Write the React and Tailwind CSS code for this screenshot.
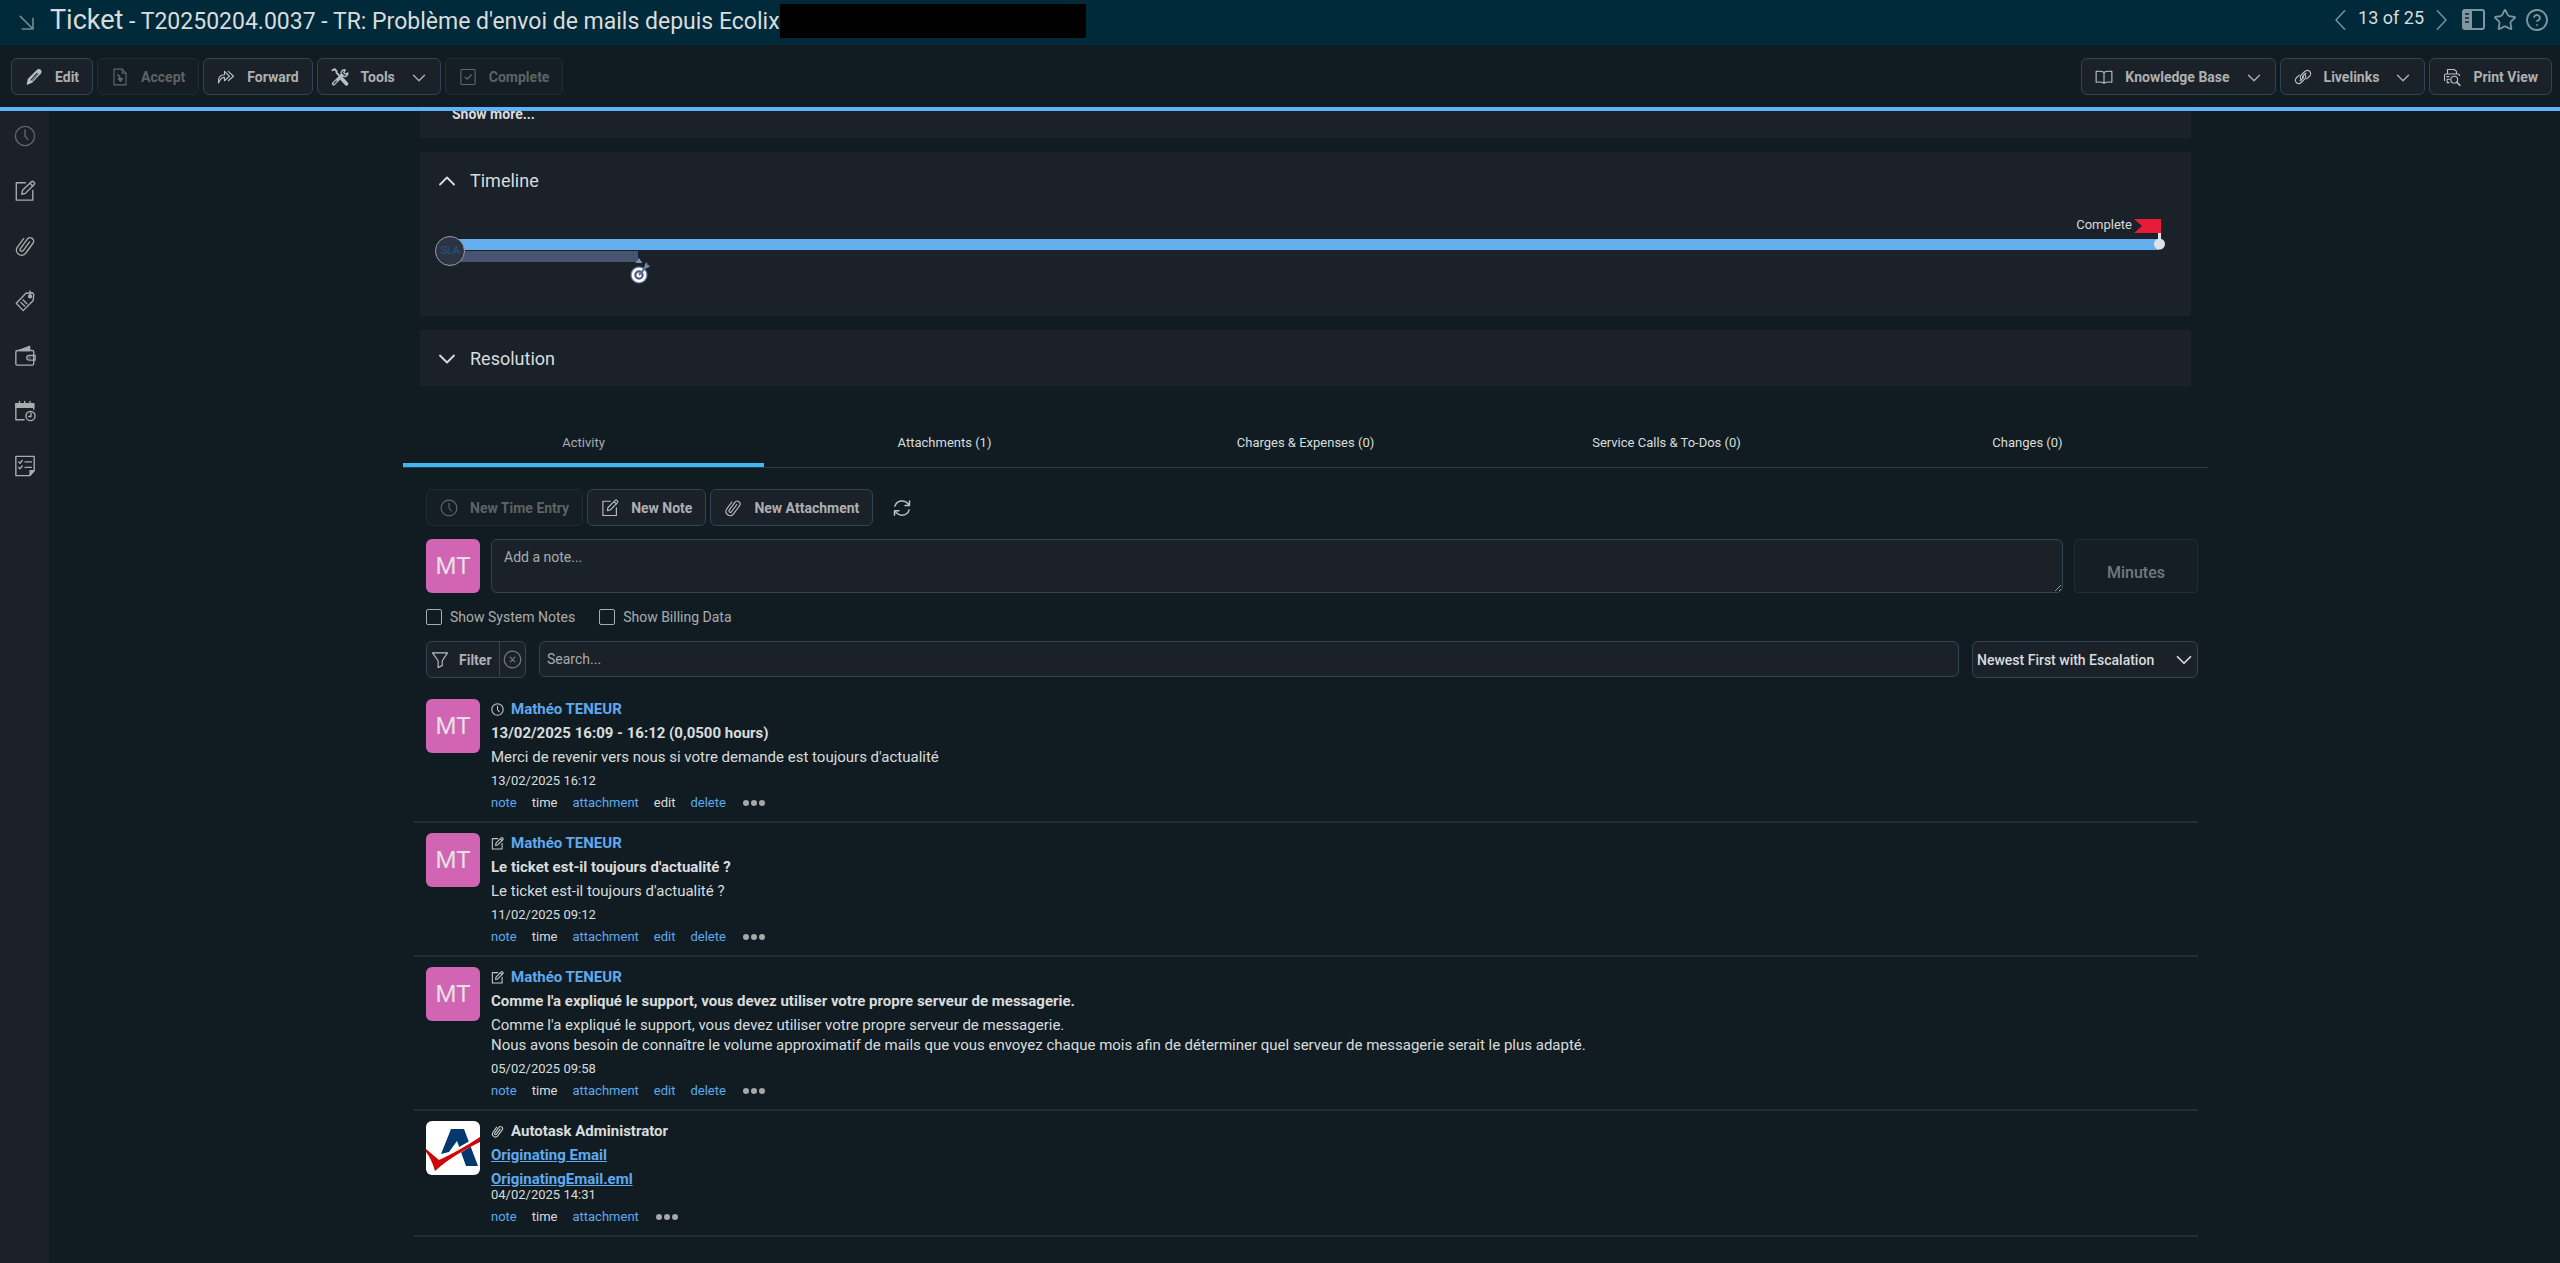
import React, { useState } from 'react';
import clsx from 'clsx';
import { ChevronDown, ChevronUp, Star, CircleHelp } from 'lucide-react';

const Svg = ({ size = 22, sw = 1.5, className, children }) => (
  <svg
    width={size}
    height={size}
    viewBox="0 0 24 24"
    fill="none"
    stroke="currentColor"
    strokeWidth={sw}
    strokeLinecap="round"
    strokeLinejoin="round"
    className={clsx('shrink-0', className)}
    aria-hidden="true"
  >
    {children}
  </svg>
);

const ClockIcon = (props) => (
  <Svg {...props}>
    <circle cx="12" cy="12" r="10.5" />
    <path d="M12 5.5v6.5l3 4" />
  </Svg>
);

const NoteIcon = (props) => (
  <Svg {...props}>
    <path d="M12.5 3H2.5v19h18V11.5" />
    <path d="M8.5 15.5l.8-4.2L19 1.8a1.5 1.5 0 0 1 2.1 0l.9.9a1.5 1.5 0 0 1 0 2.1l-9.6 9.8z" />
    <path d="M17.5 3.5l3 3" />
  </Svg>
);

const ClipIcon = (props) => (
  <Svg {...props}>
    <path d="M17 7.5l-7.2 9.8a1.9 1.9 0 0 1-3-2.2l7.7-10.6a3.8 3.8 0 0 1 6.2 4.5l-8.2 11.2a5.600 5.600 0 0 1-9-6.600L10.500 4" />
  </Svg>
);

const TagIcon = (props) => (
  <Svg {...props}>
    <path d="M2.5 14.5L13 3.5l7-.5 1.500 1.500-.5 7L10 22.500z" />
    <circle cx="17.5" cy="7" r="1.6" fill="currentColor" />
    <path d="M17.5 7V1M7.5 13.5l4 4M10 11l4 4" />
  </Svg>
);

const WalletIcon = (props) => (
  <Svg {...props}>
    <path d="M5.5 6L17 1.5V6z" fill="currentColor" />
    <path d="M2 7.5C2 6.5 3 6 4 6h16c1 0 1.5.6 1.5 1.5v13c0 1-.5 1.5-1.5 1.5H3.5c-1 0-1.500-.5-1.500-1.500z" />
    <path d="M23 11.5h-6.5a2.5 2.5 0 0 0 0 5H23z" />
    <path d="M17 14h.5" />
  </Svg>
);

const CalendarIcon = (props) => (
  <Svg {...props}>
    <path d="M11 21.5H2V4h19.500v6" />
    <path d="M2 4h19.500v4H2z" fill="currentColor" />
    <path d="M6 1.500v3M11.700 1.500v3M17.500 1.500v3" />
    <circle cx="18" cy="17.5" r="5" />
    <path d="M18.5 14.5v3.500H16" />
  </Svg>
);

const ChecklistIcon = (props) => (
  <Svg {...props}>
    <path d="M2 1.5h20V17l-5 5.500H2z" />
    <path d="M17.5 22v-5H22z" fill="currentColor" />
    <path d="M5 7.500l1.500 1.500L9 6M5 13.500l1.500 1.500L9 12M12 7.500h7M12 13.500h7" />
  </Svg>
);

const PencilIcon = (props) => (
  <Svg {...props}>
    <path d="M3 21.5L4.500 15l12-12c1.500-1.500 3-1 4 0s1.200 2.500 0 4L9 19z" fill="currentColor" />
    <path d="M8 16l8-9" stroke="#1a2129" />
    <path d="M9.5 17l8-9" stroke="#1a2129" strokeWidth="1" />
  </Svg>
);

const AcceptIcon = (props) => (
  <Svg {...props}>
    <path d="M4 1.5h11L20 7v15.500H4z" />
    <path d="M15 1.500V7h5" />
    <path d="M8.500 9c3 .5 4 2.500 4 7M9.500 14l3 4 3-4z" fill="currentColor" />
  </Svg>
);

const ForwardIcon = (props) => (
  <Svg {...props}>
    <path d="M2 20C1 13 4 9 10 9V4.500l6.500 6.500-6.500 6v-4.500C6.500 12.500 4 15 2 20z" />
    <path d="M15 4.500l7 6.500-7 6" />
  </Svg>
);

const ToolsIcon = (props) => (
  <Svg {...props}>
    <path d="M2 3l3-1.500 2.500 3v2l5 5" strokeWidth="2.6" />
    <path d="M15 15l5.500 6" strokeWidth="5" />
    <path d="M3.5 21l11-11" strokeWidth="4.5" />
    <path d="M19 2.500a4.500 4.500 0 1 0 3.500 4l-3 2L17 6z" strokeWidth="1.8" />
    <path d="M4 20.500l3-3" stroke="#1a2129" />
  </Svg>
);

const CompleteIcon = (props) => (
  <Svg {...props}>
    <rect x="2.5" y="2" width="19" height="20" rx="1.5" />
    <path d="M8 12l3 3 5.500-6" />
  </Svg>
);

const BookIcon = (props) => (
  <Svg {...props}>
    <path d="M12 6C10 4 6 4 1.500 4.500V19c4-.5 8-.5 10.500 1.500 2.500-2 6.500-2 10.500-1.500V4.500C18 4 14 4 12 6zM12 6v14" />
  </Svg>
);

const LinkIcon = (props) => (
  <Svg {...props}>
    <path d="M10.500 16c-2.500-1.500-3-4.500-1-6.500L14 5c2-2 4.700-2.300 6.700-.6s2 4.600 0 6.600L17 14.500" />
    <path d="M13.500 8c2.500 1.500 3 4.500 1 6.500L10 19c-2 2-4.700 2.300-6.700.6s-2-4.600 0-6.600L7 9.500" />
    <path d="M12 13.500c-1-.8-1-2 0-3L16 7M12 10.500c1 .8 1 2 0 3L8 17" />
  </Svg>
);

const PrintIcon = (props) => (
  <Svg {...props}>
    <path d="M6 8V2h9l3 2.500V8M8 19.500H5.500V15M2 16.500V10c0-1 .7-2 2-2h16c1 0 2 .8 2 2M5.500 15H9M8 11.500H5" />
    <circle cx="15" cy="15.5" r="4.5" />
    <path d="M18.5 19l4 4" strokeWidth="2.2" />
  </Svg>
);

const RefreshIcon = (props) => (
  <Svg {...props}>
    <path d="M2.5 9.500C4 4.500 8 2.500 12 2.500c4 0 7 2 9 5M22 2.500v6h-6M21.500 14.500c-1.500 5-5.500 7-9.500 7-4 0-7-2-9-5M2 21.500v-6h6" />
  </Svg>
);

const FilterIcon = (props) => (
  <Svg {...props}>
    <path d="M2 2.500h20L15 13v6.500L9.500 22v-9z" />
  </Svg>
);

const PanelIcon = () => (
  <svg width="23" height="21" viewBox="0 0 23 21" fill="none" className="shrink-0" aria-hidden="true">
    <rect x="1" y="1" width="21" height="19" rx="2" stroke="currentColor" strokeWidth="2" />
    <path d="M1 1h9v19H1z" fill="currentColor" />
    <path d="M3 5h4M3 9h4M3 13h4" stroke="#002a39" strokeWidth="1.5" />
  </svg>
);

const AutotaskLogo = () => (
  <svg width="54" height="54" viewBox="0 0 54 54" className="shrink-0 rounded-md bg-white" role="img" aria-label="Autotask">
    <path d="M25 8h13l14 37H40L31 20 23 31l-8 2z" fill="#02386d" />
    <path d="M0 29l11 10c12-6 26-14 43-24v4C40 27 24 36 10 50z" fill="#fff" stroke="#fff" strokeWidth="2" />
    <path d="M0 28l13 11c13-6 26-13 41-23v5C38 29 22 38 9 50 7 43 4 36 0 31z" fill="#d00505" />
  </svg>
);

const ToolButton = ({ icon: Icon, label, disabled, menu }) => (
  <button
    disabled={disabled}
    className={clsx(
      'flex h-[37px] items-center gap-3 rounded-md border px-[13px] text-sm font-bold whitespace-nowrap',
      disabled ? 'border-[#1f2d34] bg-[#141e24] text-[#5e6365]' : 'border-[#30454e] bg-[#1a2129] text-[#aeb0b1]'
    )}
  >
    <Icon size={18} className={disabled ? 'text-[#5e686c]' : 'text-[#b5c1c5]'} />
    {label}
    {menu && <ChevronDown className="-mr-1 h-6 w-6 pt-0.5" strokeWidth={1.5} />}
  </button>
);

const sideItems = [
  { name: 'New time entry', icon: ClockIcon, dim: true },
  { name: 'New note', icon: NoteIcon },
  { name: 'New attachment', icon: ClipIcon },
  { name: 'New charge', icon: TagIcon },
  { name: 'New expense', icon: WalletIcon },
  { name: 'New service call', icon: CalendarIcon },
  { name: 'New to-do', icon: ChecklistIcon },
];

const tabs = ['Activity', 'Attachments (1)', 'Charges & Expenses (0)', 'Service Calls & To-Dos (0)', 'Changes (0)'];

const entries = [
  {
    icon: ClockIcon,
    author: 'Mathéo TENEUR',
    title: '13/02/2025 16:09 - 16:12 (0,0500 hours)',
    body: ["Merci de revenir vers nous si votre demande est toujours d'actualité"],
    date: '13/02/2025 16:12',
    actions: ['note', 'time', 'attachment', 'edit', 'delete'],
    inactive: ['time', 'edit'],
  },
  {
    icon: NoteIcon,
    author: 'Mathéo TENEUR',
    title: "Le ticket est-il toujours d'actualité ?",
    body: ["Le ticket est-il toujours d'actualité ?"],
    date: '11/02/2025 09:12',
    actions: ['note', 'time', 'attachment', 'edit', 'delete'],
    inactive: ['time'],
  },
  {
    icon: NoteIcon,
    author: 'Mathéo TENEUR',
    title: "Comme l'a expliqué le support, vous devez utiliser votre propre serveur de messagerie.",
    body: [
      "Comme l'a expliqué le support, vous devez utiliser votre propre serveur de messagerie.",
      'Nous avons besoin de connaître le volume approximatif de mails que vous envoyez chaque mois afin de déterminer quel serveur de messagerie serait le plus adapté.',
    ],
    date: '05/02/2025 09:58',
    actions: ['note', 'time', 'attachment', 'edit', 'delete'],
    inactive: ['time'],
  },
  {
    icon: ClipIcon,
    author: 'Autotask Administrator',
    system: true,
    files: ['Originating Email', 'OriginatingEmail.eml'],
    date: '04/02/2025 14:31',
    actions: ['note', 'time', 'attachment'],
    inactive: ['time'],
  },
];

const Avatar = () => (
  <div className="flex h-[54px] w-[54px] shrink-0 items-center justify-center rounded-md bg-[#d265b3] text-2xl text-[#e6dfe3]">MT</div>
);

const Entry = ({ entry }) => {
  const Icon = entry.icon;
  return (
    <li className="flex gap-[11px] border-b-2 border-[#232d38] pt-[10px] pb-2 pl-3">
      {entry.system ? <AutotaskLogo /> : <Avatar />}
      <div className="text-[15px] leading-5">
        <div className="flex items-center gap-[7px] font-bold">
          <Icon size={13} sw={2} className="text-[#c3c6c8]" />
          {entry.system ? <span>{entry.author}</span> : <a href="#" className="text-[#5fa9ee]">{entry.author}</a>}
        </div>
        {entry.title && <h3 className="mt-1 font-bold">{entry.title}</h3>}
        {entry.body && <div className="mt-1">{entry.body.map((line) => <p key={line}>{line}</p>)}</div>}
        {entry.files && (
          <div className="mt-1 flex flex-col items-start gap-1 font-bold">
            {entry.files.map((file) => <a key={file} href="#" className="text-[#5fa9ee] underline">{file}</a>)}
          </div>
        )}
        <p className={clsx('text-[13px]', entry.files ? '-mt-1' : 'mt-1')}>{entry.date}</p>
        <div className="mt-0.5 flex items-center gap-[15px] text-[13px]">
          {entry.actions.map((action) =>
            entry.inactive.includes(action)
              ? <span key={action}>{action}</span>
              : <a key={action} href="#" className="text-[#5fa9ee]">{action}</a>
          )}
          <button aria-label="More actions" className="flex gap-0.5 pl-0.5">
            <i className="h-1.5 w-1.5 rounded-full bg-[#a5a7a8]" />
            <i className="h-1.5 w-1.5 rounded-full bg-[#a5a7a8]" />
            <i className="h-1.5 w-1.5 rounded-full bg-[#a5a7a8]" />
          </button>
        </div>
      </div>
    </li>
  );
};

const PanelHeading = ({ label, open }) => {
  const Chevron = open ? ChevronUp : ChevronDown;
  return (
    <h2>
      <button aria-expanded={open} className="flex h-14 items-center gap-[9px] pt-0.5 pl-[13px] text-lg">
        <Chevron className="h-7 w-7" strokeWidth={1.6} />
        {label}
      </button>
    </h2>
  );
};

const Timeline = () => (
  <section className="h-[164px] bg-[#1a2129]">
    <PanelHeading label="Timeline" open />
    <div className="relative mt-[31px] mr-8 ml-[30px]">
      <div className="h-[11px] bg-[#65afee]" />
      <div className="mt-px h-[11px] w-[11%] bg-[#48536f]" />
      <div className="absolute -top-[3px] -left-[15px] flex h-[30px] w-[30px] items-center justify-center rounded-full border border-[#9a9ca5] bg-[#2c3343] text-[11px] text-[#1f5793]">
        SLA
      </div>
      <svg width="22" height="30" viewBox="0 0 22 30" className="absolute top-[17px] left-[11%] -ml-[10px]" aria-hidden="true">
        <path d="M7.5 7L11 2l3.500 5z" fill="#7d8fb8" />
        <circle cx="11" cy="19" r="8.5" fill="#7485ad" />
        <circle cx="11" cy="19" r="6" fill="#4d5b80" stroke="#fff" strokeWidth="2.5" />
        <circle cx="11" cy="19" r="2.5" fill="#fff" />
        <path d="M11 19l7-8" stroke="#5f6f97" strokeWidth="2" />
        <path d="M16 12l1-4 2-2 .5 3 2.500.500-2 2.500z" fill="#7485ad" />
      </svg>
      <div className="absolute -top-6 right-[27px] text-[13px] leading-5">Complete</div>
      <svg width="34" height="34" viewBox="0 0 34 34" className="absolute -top-[21px] -right-2" aria-hidden="true">
        <path d="M1 1h27v14H1l8-7z" fill="#e81b39" />
        <path d="M26.500 15v8" stroke="#dfe1e8" strokeWidth="3" />
        <circle cx="26.500" cy="26" r="5.500" fill="#dfe1e8" />
      </svg>
    </div>
  </section>
);

export default function App() {
  const [tab, setTab] = useState(0);

  return (
    <div className="flex min-h-screen flex-col bg-[#111c22] font-[Roboto,sans-serif] text-[#d9dcdd]">
      <header className="flex h-[45px] items-center bg-[#002a39] pr-[11px] pl-[19px]">
        <Svg size={16} sw={2.5} className="text-[#72878f]">
          <path d="M2 2l19 19M21 5v16H5" />
        </Svg>
        <h1 className="ml-[15px] flex items-baseline pb-1 text-[23px] whitespace-pre">
          <span className="text-[27px] leading-9">Ticket</span> - T20250204.0037 - TR: Problème d'envoi de mails depuis Ecolix
        </h1>
        <div className="mb-1 h-[34px] w-[306px] bg-black" />
        <div className="mb-1.5 ml-auto flex items-center text-[#80959d]">
          <button aria-label="Previous"><Svg><path d="M16 2L6.500 12 16 22" /></Svg></button>
          <span className="px-1.5 pb-1 text-lg leading-6 text-[#d9dcdd]">13 of 25</span>
          <button aria-label="Next" className="mr-[10px]"><Svg><path d="M8 2l9.500 10L8 22" /></Svg></button>
          <div className="flex items-center gap-2">
            <button aria-label="Toggle panel"><PanelIcon /></button>
            <button aria-label="Favorite"><Star className="h-6 w-6" strokeWidth={1.8} /></button>
            <button aria-label="Help"><CircleHelp className="h-6 w-6" strokeWidth={1.8} /></button>
          </div>
        </div>
      </header>

      <div className="flex h-[66px] items-start gap-1 border-b-4 border-[#5fb1fb] pt-[13px] pr-2 pl-[11px]">
        <ToolButton icon={PencilIcon} label="Edit" />
        <ToolButton icon={AcceptIcon} label="Accept" disabled />
        <ToolButton icon={ForwardIcon} label="Forward" />
        <ToolButton icon={ToolsIcon} label="Tools" menu />
        <ToolButton icon={CompleteIcon} label="Complete" disabled />
        <div className="ml-auto flex gap-1">
          <ToolButton icon={BookIcon} label="Knowledge Base" menu />
          <ToolButton icon={LinkIcon} label="Livelinks" menu />
          <ToolButton icon={PrintIcon} label="Print View" />
        </div>
      </div>

      <div className="flex grow">
        <nav className="flex w-[49px] shrink-0 flex-col items-center gap-[33px] bg-[#1a2129] pt-[14px]">
          {sideItems.map(({ name, icon: Icon, dim }) => (
            <button key={name} aria-label={name} className={dim ? 'text-[#5e6669]' : 'text-[#a9acad]'}>
              <Icon size={22} />
            </button>
          ))}
        </nav>

        <main className="min-w-0 grow overflow-hidden pr-4 pl-[18px]">
          <div className="mx-auto w-full max-w-[1805px]">
            <div className="flex flex-col gap-[14px] px-[17px]">
              <section className="-mt-2 h-[35px] bg-[#1a2129] pl-8 text-sm leading-[22px] font-bold">
                <button>Show more...</button>
              </section>
              <Timeline />
              <section className="bg-[#1a2129]">
                <PanelHeading label="Resolution" open={false} />
              </section>
            </div>

            <div role="tablist" className="mt-8 grid grid-cols-5 border-b border-[#2a3d47]">
              {tabs.map((name, i) => (
                <button
                  key={name}
                  role="tab"
                  aria-selected={tab === i}
                  onClick={() => setTab(i)}
                  className={clsx(
                    'h-[49px] border-b-4 pt-1 text-[13px]',
                    tab === i ? 'border-[#3fb5f4] text-[#a9acad]' : 'border-transparent text-[#d9dcdd]'
                  )}
                >
                  {name}
                </button>
              ))}
            </div>

            <div className="pr-[10px] pl-[11px]">
              <div className="mt-[21px] flex items-center gap-1 pl-3">
                <ToolButton icon={ClockIcon} label="New Time Entry" disabled />
                <ToolButton icon={NoteIcon} label="New Note" />
                <ToolButton icon={ClipIcon} label="New Attachment" />
                <button aria-label="Refresh" className="ml-4 text-[#b5c1c5]"><RefreshIcon size={18} sw={2} /></button>
              </div>

              <div className="mt-[13px] flex gap-[11px] pl-3">
                <Avatar />
                <textarea
                  aria-label="Add a note"
                  placeholder="Add a note..."
                  className="h-[54px] grow resize rounded-md border border-[#30454e] bg-[#1a2129] px-3 py-[7px] text-sm placeholder:text-[#a9acad] [color-scheme:dark]"
                />
                <input
                  aria-label="Minutes"
                  placeholder="Minutes"
                  disabled
                  className="h-[54px] w-[124px] rounded-sm border border-[#1f2d34] bg-[#141e24] pt-3 text-center font-medium placeholder:text-[#75797b]"
                />
              </div>

              <div className="mt-[14px] flex items-center gap-6 pl-3 text-sm text-[#a9acad]">
                <label className="flex items-center gap-2">
                  <input type="checkbox" className="h-4 w-4 appearance-none rounded-xs border border-[#a9acad]" />
                  Show System Notes
                </label>
                <label className="flex items-center gap-2">
                  <input type="checkbox" className="h-4 w-4 appearance-none rounded-xs border border-[#a9acad]" />
                  Show Billing Data
                </label>
              </div>

              <div className="mt-[14px] flex gap-[13px] pl-3">
                <div className="flex h-[37px] w-[100px] rounded-md border border-[#30454e] bg-[#1a2129]">
                  <button className="flex grow items-center gap-[10px] pl-1 text-sm font-bold text-[#aeb0b1]">
                    <FilterIcon size={18} className="text-[#b5c1c5]" />
                    Filter
                  </button>
                  <button aria-label="Clear filter" className="flex w-[26px] items-center justify-center border-l border-[#30454e] text-[#767c7f]">
                    <Svg size={19}>
                      <circle cx="12" cy="12" r="10.5" />
                      <path d="M9 9l6 6M15 9l-6 6" />
                    </Svg>
                  </button>
                </div>
                <input
                  type="text"
                  aria-label="Search"
                  placeholder="Search..."
                  className="h-9 min-w-0 grow rounded-md border border-[#30454e] bg-[#1a2129] px-[7px] text-sm placeholder:text-[#a9acad]"
                />
                <div className="relative">
                  <select aria-label="Sort order" className="h-[37px] w-[226px] appearance-none rounded-md border border-[#30454e] bg-[#1a2129] pl-1 text-sm font-medium">
                    <option>Newest First with Escalation</option>
                  </select>
                  <ChevronDown className="pointer-events-none absolute top-1.5 right-px h-6.5 w-6.5" strokeWidth={1.6} />
                </div>
              </div>

              <ul className="mt-[11px]">
                {entries.map((entry) => <Entry key={entry.date} entry={entry} />)}
              </ul>
            </div>
          </div>
        </main>
      </div>
    </div>
  );
}
